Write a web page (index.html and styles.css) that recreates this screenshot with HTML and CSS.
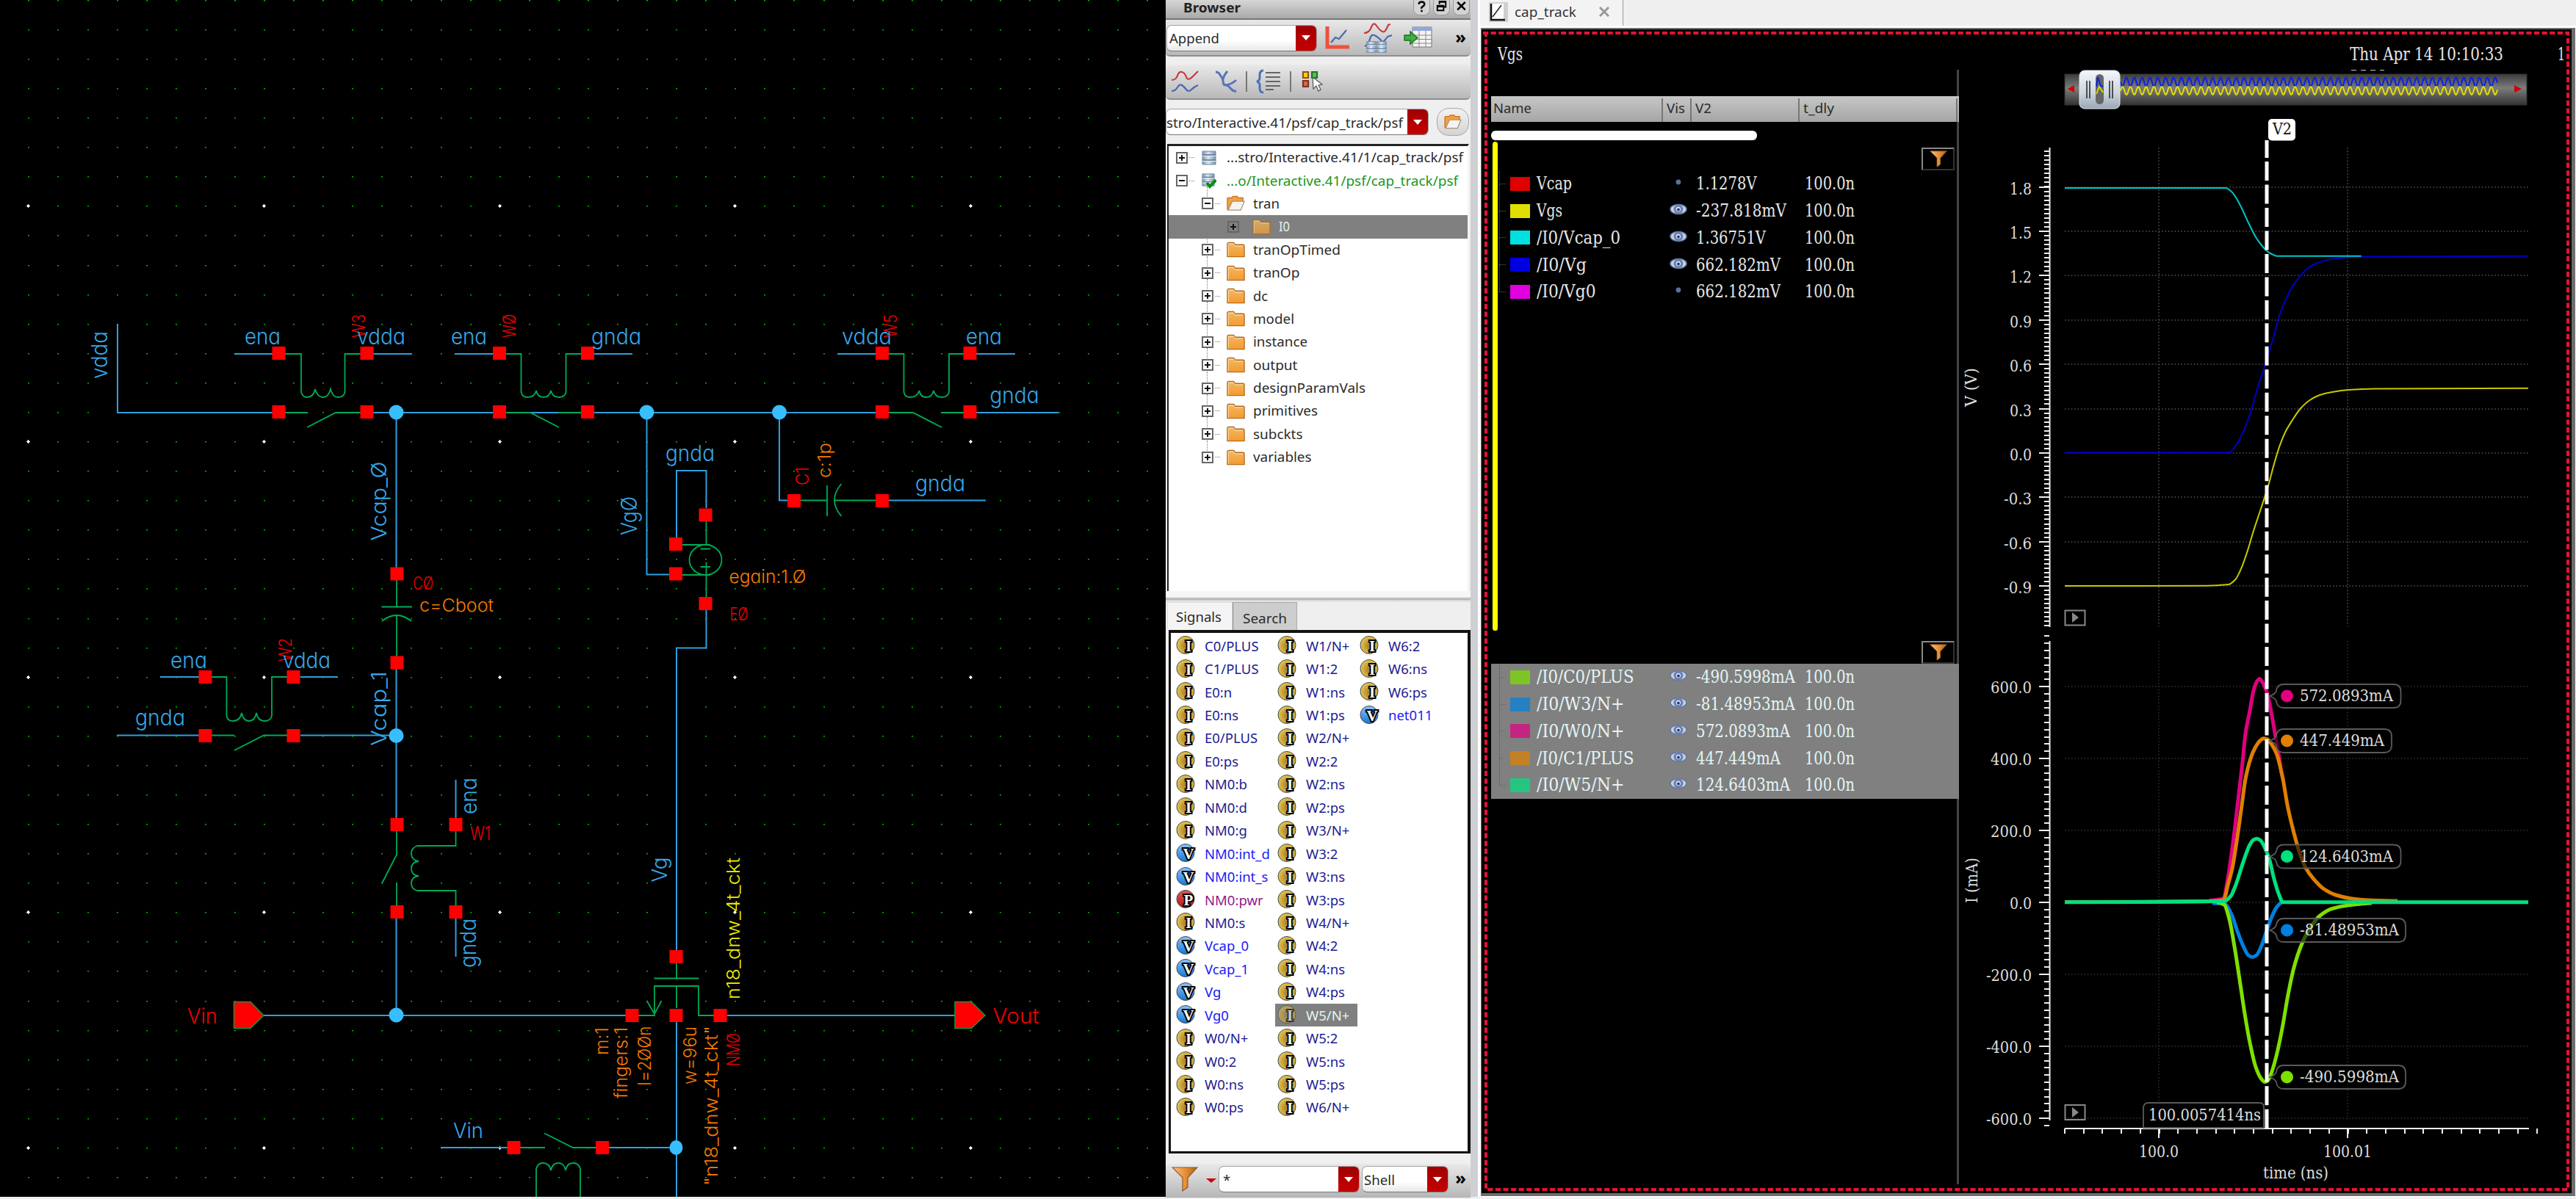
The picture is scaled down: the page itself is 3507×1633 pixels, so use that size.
FILE: index.html
```html
<!DOCTYPE html>
<html lang="en">
<head>
<meta charset="utf-8">
<title>cap_track</title>
<link rel="stylesheet" href="styles.css">
</head>
<body>
<svg width="0" height="0" class="defs">
  <defs>
    <linearGradient id="gFolder" x1="0" y1="0" x2="0" y2="1"><stop offset="0" stop-color="#f0b968"/><stop offset="1" stop-color="#f59a2e"/></linearGradient>
    <linearGradient id="gFunnel" x1="0" y1="0" x2="1" y2="0"><stop offset="0" stop-color="#f7c48a"/><stop offset=".5" stop-color="#ec9038"/><stop offset="1" stop-color="#a8641c"/></linearGradient>
    <linearGradient id="gDb" x1="0" y1="0" x2="1" y2="0"><stop offset="0" stop-color="#7d97b3"/><stop offset=".45" stop-color="#d9e6f0"/><stop offset="1" stop-color="#7b93ad"/></linearGradient>
    <radialGradient id="gI" cx=".55" cy=".55" r=".6"><stop offset="0" stop-color="#a8741c"/><stop offset="1" stop-color="#e6cf5c"/></radialGradient>
    <linearGradient id="gV" x1="0" y1="0" x2="0" y2="1"><stop offset="0" stop-color="#8cc4ff"/><stop offset="1" stop-color="#1478d8"/></linearGradient>
    <linearGradient id="gP" x1="0" y1="0" x2="0" y2="1"><stop offset="0" stop-color="#e05a5a"/><stop offset="1" stop-color="#b01818"/></linearGradient>
    <linearGradient id="gTrack" x1="0" y1="0" x2="0" y2="1"><stop offset="0" stop-color="#3c3c3c"/><stop offset=".45" stop-color="#7c7c7c"/><stop offset="1" stop-color="#333"/></linearGradient>
    <linearGradient id="gHandle" x1="0" y1="0" x2="0" y2="1"><stop offset="0" stop-color="#f4f6fa"/><stop offset=".6" stop-color="#ccd4dd"/><stop offset="1" stop-color="#9aa6b4"/></linearGradient>
    <symbol id="folder" viewBox="0 0 26 22"><path d="M1 3q0-2 2-2h7l2 3h11q2 0 2 2v15h-24z" fill="url(#gFolder)" stroke="#b9691c" stroke-width="1.4"/><path d="M2.5 20V3H10l2 3h11" fill="none" stroke="#ffe0b0" stroke-width="1"/></symbol>
    <symbol id="folderOpen" viewBox="0 0 26 22"><path d="M1 20V4q0-1 1-1h5l2-2h6l1 2h7v6" fill="#f0a040" stroke="#c77422" stroke-width="1.4"/><path d="M2 20.5L8 8h17l-5 12.500z" fill="#f7f3ee" stroke="#a89078" stroke-width="1.3"/></symbol>
    <symbol id="db" viewBox="0 0 20 22" preserveAspectRatio="none"><path d="M1 2h18v18H1z" fill="url(#gDb)" stroke="#6f87a0"/><path d="M1 7h18M1 14h18" stroke="#5e7690" stroke-width="1.3"/><path d="M1 8.500h18M1 15.500h18" stroke="#eef4fa"/></symbol>
    <symbol id="dbCheck" viewBox="0 0 20 22"><use href="#db" x="0" y="0" width="18" height="20"/><path d="M7 14l4 5L19.500 10" fill="none" stroke="#0f8a0f" stroke-width="4"/></symbol>
    <symbol id="funnel" viewBox="0 0 36 34"><path d="M1 1h34L22 15v13l-7 5V15z" fill="url(#gFunnel)" stroke="#8d5a28" stroke-width="1.200"/></symbol>
    <symbol id="eye" viewBox="0 0 24 18"><ellipse cx="12" cy="9" rx="11" ry="6.500" fill="#c8d2e6" stroke="#6478a0" stroke-width="1.5"/><circle cx="12" cy="9" r="6.500" fill="#6a82b4"/><circle cx="12" cy="9" r="3.200" fill="#dfe6f4"/><circle cx="12" cy="9.500" r="2" fill="#2c3c68"/></symbol>
    <symbol id="dot" viewBox="0 0 24 18"><circle cx="12" cy="9" r="3.400" fill="#5a70a0"/></symbol>
  </defs>
</svg>

<main class="desk">
<section class="schematic">
<svg width="1587" height="1630" viewBox="0 0 1587 1630">
  <g id="grid"></g>
  <g class="wire">
    <path d="M160 441V562H371M508 562H1192M371 482H319M508 482H561M671 482H619M809 482H861M1192 482H1140M1329 482H1382M1329 562H1441"/>
    <path d="M539.500 562V773M539.500 911V1114M539.500 1251V1383M218 922H271M409 922H460M159 1001.500H271M409 1001.500H539"/>
    <path d="M880.500 562V782.500H912M921 733V641H961.500V692M961.500 831V882.500H921V1294M1061 562V681.500H1072M1210 681.500H1342"/>
    <path d="M620.500 1062V1114M620.500 1251V1303M359 1383H852M990 1383H1300M921 1383V1630M600 1563H691M829 1563H921"/>
  </g>
  <g class="dev">
    <path d="M388 482H410V534Q412 541 418 541Q427 541 429 530Q432 541 440 541Q447 541 450 530Q453 541 460 541Q468 541 469.500 534V482H491M388 562H419M418 582L457 562H491"/>
    <path d="M689 482H709.500V534Q711 541 718 541Q728 541 730 532Q732 541 740 541Q748 541 750 532Q752 541 761 541Q769 541 770.500 534V482H791M689 562H722L761 582M760 562H791"/>
    <path d="M1210 482H1230.500V534Q1232 541 1239 541Q1249 541 1251.500 532Q1253 541 1261 541Q1269 541 1271 532Q1273 541 1282 541Q1290 541 1292 534V482H1312M1210 562H1243L1282 582M1281 562H1312"/>
    <path d="M540 790V826.500M519.500 826.500H561M520 846Q530 838 540 838T560 846M540 838V894"/>
    <path d="M288 922H308.500V975Q310 982 317 982Q327 982 329 971Q331 982 339 982Q347 982 349 971Q351 982 360 982Q368 982 370 975V922H391M288 1001.500H319M319 1022L359 1001.500H391"/>
    <path d="M1090 681.500H1126M1126 661V703M1145.500 659Q1136 670 1136 681T1145.500 703M1136 681.500H1192"/>
    <path d="M961.500 710V742M929 742H967M929 783H967M961.500 766V813M953.500 747.500H967M953.500 772H967"/><ellipse cx="960.500" cy="762.500" rx="22" ry="20.500"/>
    <path d="M540 1131V1164L520 1203M540 1202V1233M620.500 1131V1152H568Q560 1155 560 1162Q560 1172 570 1173Q560 1174 560 1183Q560 1192 570 1193Q560 1194 560 1203Q560 1211 568 1213H620.500V1233"/>
    <path d="M921 1312V1332.500M890.500 1332.500H951.500M869 1383H891V1343H951V1383H972M921 1343V1373M880.500 1363L891 1381L900.500 1363"/>
    <path d="M708 1563H742M741 1543.500L780 1563H811M730 1630V1592Q732 1584 739 1584Q748 1584 750 1594Q752 1584 760 1584Q768 1584 770 1594Q772 1584 780 1584Q788 1584 790 1592V1630"/>
  </g>
  <g class="pinshape"><path d="M318.500 1364.500H341L359 1383L341 1400.500H318.500z"/><path d="M1300 1364.500H1322.500L1341 1383L1322.500 1400.500H1300z"/></g>
  <g id="pads" class="pad"></g>
  <g class="joint"><circle cx="539.500" cy="561.500" r="10"/><circle cx="880.500" cy="561.500" r="10"/><circle cx="1061" cy="561.500" r="10"/><circle cx="539.500" cy="1002" r="10"/><circle cx="539.500" cy="1382.500" r="10"/><ellipse cx="920.500" cy="1563" rx="9" ry="10"/></g>
  <g id="netText" class="cad"></g>
</svg>
</section>

<section class="browser">
  <header class="title"><b class="fit" data-w="78">Browser</b><span class="winbtns">
    <i><svg viewBox="0 0 22 20"><path d="M7 6q0-3.500 4-3.500t4 3.500q0 2-2.500 3.300T11 12.500M11 14.500v2.500" fill="none" stroke="#000" stroke-width="2.600"/></svg></i>
    <i><svg viewBox="0 0 22 20"><path d="M8 6V2h9v8h-3M5 8h9v7H5zM5 9.500h9M8 3h9" fill="none" stroke="#000" stroke-width="2"/></svg></i>
    <i><svg viewBox="0 0 22 20"><path d="M5.500 3L16.500 14M16.500 3L5.500 14" stroke="#000" stroke-width="2.800"/></svg></i></span></header>
  <div class="bar bar1">
    <div class="combo c1"><span class="fit" data-w="68">Append</span><i></i></div>
    <svg class="i1" width="34" height="34" viewBox="0 0 34 34"><path d="M3 1V29H33" fill="none" stroke="#f0503c" stroke-width="5"/><path d="M8 23L14 16L19 18L29 6" fill="none" stroke="#4868b0" stroke-width="2.200"/></svg>
    <svg class="i2" width="40" height="42" viewBox="0 0 40 42"><path d="M1 14Q8 14 11 6T18 4T26 12T34 3L37 2" fill="none" stroke="#c83c3c" stroke-width="2.200"/><path d="M2 32Q7 30 9 22T17 18T25 25T33 19L39 17" fill="none" stroke="#4868b0" stroke-width="2.200"/><use href="#db" x="4" y="24" width="14" height="18"/><use href="#db" x="18" y="24" width="14" height="18"/></svg>
    <svg class="i3" width="40" height="32" viewBox="0 0 40 32"><path d="M12 1H38V28H12z" fill="#f4f4f4" stroke="#777"/><path d="M12 1H38V6H12z" fill="#92a8dc"/><path d="M12 12H38M12 17.500H38M12 23H38M21 6V28M30 6V28" stroke="#888"/><path d="M1 12H9V7L19 15.500L9 24V19H1z" fill="#3cb040" stroke="#1c6c20" stroke-width="1.400"/></svg>
    <b class="more">»</b>
  </div>
  <div class="bar bar2">
    <svg width="38" height="30" viewBox="0 0 38 30"><path d="M1 13Q7 13 9 7T15 2T21 9T30 8T37 1" fill="none" stroke="#c83c3c" stroke-width="2.200"/><path d="M1 28Q6 28 9 23T15 20T21 26T28 26T37 20" fill="none" stroke="#4868b0" stroke-width="2.200"/></svg>
    <svg class="j2" width="30" height="30" viewBox="0 0 30 30"><path d="M1 2Q5 2 7 6L11 12Q12 7 17 1M10 10L12 19L16 20Q24 18 29 13M12 20Q17 19 21 24T29 28" fill="none" stroke="#5874b8" stroke-width="3"/></svg>
    <i class="sep"></i>
    <svg class="j3" width="34" height="34" viewBox="0 0 34 34"><path d="M10 2Q5 2 5 8V12Q5 16 1 17Q5 18 5 22V26Q5 32 10 32" fill="none" stroke="#5070b4" stroke-width="3"/><path d="M13 5H33M13 11H33M13 17H33M13 23H33M13 28H24" stroke="#666" stroke-width="2"/></svg>
    <i class="sep"></i>
    <svg class="j4" width="30" height="30" viewBox="0 0 30 30"><path d="M2 2H9V10H2z" fill="#ffd200" stroke="#905018" stroke-width="2.200"/><path d="M14 2H21V10H14z" fill="#50c850" stroke="#207820" stroke-width="2.200"/><path d="M2 14H9V22H2z" fill="#d86a50" stroke="#803020" stroke-width="2.200"/><path d="M15 9L16 25L20 21L23 28L26 26L23 20L28 19z" fill="#fff" stroke="#555" stroke-width="1.200"/></svg>
  </div>
  <div class="path"><div class="combo c2"><span class="fit" data-w="322">stro/Interactive.41/psf/cap_track/psf</span><i></i></div><div class="fbtn"><svg width="24" height="20"><use href="#folderOpen"/></svg></div></div>
  <div class="tree" id="tree"></div>
  <div class="splitH"></div>
  <div class="tabs"><span class="on"><u class="fit" data-w="62">Signals</u></span><span><u class="fit" data-w="60">Search</u></span></div>
  <div class="signals" id="signals"></div>
  <footer class="bar bar3"><svg width="36" height="34"><use href="#funnel"/></svg><i class="tri"></i><div class="combo c3"><span>*</span><i></i></div><div class="combo c4"><span class="fit" data-w="42">Shell</span><i></i></div><b class="more">»</b></footer>
</section>

<div class="splitV"></div>

<section class="wave">
  <nav class="wtabs"><span class="wtab"><svg width="26" height="27" viewBox="0 0 26 27"><path d="M0 0H26V27H0z" fill="#d0d0d0"/><path d="M3 2H20V23H3z" fill="#fff"/><path d="M3 2V24H22" fill="none" stroke="#111" stroke-width="2.500"/><path d="M5 20L17 4" stroke="#222" stroke-width="1.500"/></svg><em class="fit" data-w="84">cap_track</em><svg class="close" width="14" height="14" viewBox="0 0 14 14"><path d="M1 1L13 13M13 1L1 13" stroke="#999" stroke-width="3"/></svg></span></nav>
  <div class="frame">
    <svg class="dash" width="1485" height="1590"><path d="M2 8H1479V1583H6V8" fill="none" stroke="#e01535" stroke-width="4" stroke-dasharray="7.200 3.400"/></svg>
    <div class="whead"><span class="fit" data-w="34">Vgs</span><span class="fit date" data-w="209">Thu Apr 14 10:10:33</span><span class="fit pg" data-w="10">1</span></div>
    <div class="wbody">
      <div class="legend">
        <div class="lhead"><span><u class="fit" data-w="52">Name</u></span><span><u class="fit" data-w="25">Vis</u></span><span><u class="fit" data-w="22">V2</u></span><span><u class="fit" data-w="42">t_dly</u></span></div>
        <div class="hscroll"></div>
        <div class="group volts"><div class="ybar"></div><div class="gmain"><div class="fb"><svg width="24" height="23"><use href="#funnel"/></svg></div><div id="volts" class="rows"></div></div></div>
        <div class="fb fb2"><svg width="24" height="23"><use href="#funnel"/></svg></div>
        <div id="amps" class="rows sel"></div>
      </div>
      <svg class="plot" width="837" height="1520" viewBox="2664 95 837 1520">
        <path d="M2665.500 95V1613" stroke="#444" stroke-width="3"/>
        <path d="M3201 95.500H3246" stroke="#aaa" stroke-width="1.500" stroke-dasharray="7 6"/>
        <rect x="2811" y="101" width="629" height="42" fill="url(#gTrack)" stroke="#333"/>
        <path d="M2824 116V126L2815 121zM3423 116V126L3433 121z" fill="#d00000"/>
        <g id="mini" fill="none" stroke-width="2"></g>
        <rect x="2831" y="96" width="55" height="52" rx="7" fill="url(#gHandle)" stroke="#dfe4ea"/>
        <rect x="2853" y="101" width="11" height="41" rx="5.500" fill="#666"/>
        <path d="M2854 118L2856 105L2860 117L2863 118" stroke="#0a28e0" stroke-width="2" fill="none"/><path d="M2854 128L2858 118L2863 126" stroke="#d8d800" stroke-width="2" fill="none"/>
        <path d="M2841 110V134M2845 110V134M2872 110V134M2876 110V134" stroke="#222" stroke-width="1.500"/>
        <g id="axes"></g>
        <g id="curves" fill="none" stroke-linejoin="round"></g>
        <path d="M3086 191V215M3086 220V1537" stroke="#fff" stroke-width="5" stroke-dasharray="26 5.480"/>
        <rect x="3088" y="162" width="37" height="29.500" rx="5" fill="#fff"/>
        <text class="ser flag" x="3094" y="183" textLength="26" lengthAdjust="spacingAndGlyphs">V2</text>
        <g id="tips"></g>
        <g class="play"><rect x="2811.500" y="831.500" width="27" height="20"/><path d="M2821 834L2830 841L2821 848z"/><rect x="2811.500" y="1505" width="27" height="20"/><path d="M2821 1508L2830 1515L2821 1522z"/></g>
      </svg>
    </div>
  </div>
</section>
</main>
<script src="app.js"></script>
</body>
</html>
```
FILE: styles.css
```css
* { box-sizing: border-box; }
body { margin: 0; background: #efefef; overflow: hidden; font: 18.5px "Noto Sans", "Open Sans", sans-serif; color: #2b2b2b; }
.defs { position: absolute; }
.desk { display: flex; width: 3507px; height: 1633px; align-items: flex-start; }
.desk svg { display: block; flex: none; }
.fit { display: inline-block; transform-origin: 0 50%; white-space: pre; text-decoration: none; font-style: normal; }
em { font-style: normal; }

/* schematic canvas */
.schematic { flex: none; width: 1587px; height: 1630px; background: #000; }
.wire path { fill: none; stroke: #2e9fdf; stroke-width: 2; }
.dev path, .dev ellipse { fill: none; stroke: #00ab55; stroke-width: 1.8; }
.pinshape path { fill: #f00; stroke: #1c8f3f; stroke-width: 1.5; }
.pad { fill: #f00; }
.joint { fill: #38bdff; }
.cad text { font-family: "Inter", "Liberation Sans", sans-serif; font-weight: 300; font-feature-settings: "cv11"; }

/* browser dock */
.browser { flex: none; width: 415px; height: 1630px; background: #efefef; display: flex; flex-direction: column; }
.title { height: 27px; flex: none; display: flex; justify-content: space-between; background: linear-gradient(#d6d6d6, #a9a9a9); border-bottom: 2px solid #777; padding: 0 1px 0 24px; line-height: 20px; font-size: 17.500px; }
.title b { color: #222; width: 90px; }
.winbtns { display: flex; gap: 4px; }
.winbtns i { width: 23px; height: 21px; border: 1px solid #999; border-top: 0; border-radius: 0 0 8px 8px; background: #d4d4d4; }
.bar { flex: none; display: flex; align-items: center; background: linear-gradient(#e9e9e9, #b8b8b8); border-bottom: 2px solid #8e8e8e; border-radius: 0 0 6px 6px; }
.bar1 { height: 50px; padding: 1px 6px 0 1px; margin-bottom: 11px; }
.bar2 { height: 48px; padding-left: 7px; border-radius: 6px; }
.bar3 { height: 46px; margin-top: 14px; padding: 0 6px 3px 8px; border-bottom: 1px solid #aaa; border-radius: 6px 6px 0 0; }
.more { font: bold 24px/24px "Noto Sans", sans-serif; color: #000; margin-left: auto; padding-bottom: 4px; }
.combo { flex: none; display: flex; align-items: center; justify-content: space-between; height: 36px; border: 1px solid #a5a5a5; border-bottom-color: #777; border-radius: 7px; background: linear-gradient(#fff 60%, #e8e8e8); overflow: hidden; padding-left: 3px; }
.combo i { flex: none; align-self: stretch; width: 28px; background: linear-gradient(#a00000, #c60000); display: grid; place-items: center; }
.combo i::after { content: ""; border: 6px solid transparent; border-top: 7px solid #fff; border-bottom: 0; }
.c1 { width: 205px; }
.i1 { margin-left: 11px; } .i2 { margin-left: 18px; } .i3 { margin-left: 15px; }
.j2 { margin-left: 22px; } .j3 { margin-left: 12px; } .j4 { margin-left: 14px; }
.sep { width: 2px; height: 28px; background: #777; margin-left: 12px; }
.path { flex: none; display: flex; height: 60px; align-items: center; }
.c2 { width: 358px; padding-left: 0; background: #fff; }
.c2 span { width: 0; }
.fbtn { width: 44px; height: 38px; margin-left: 11px; border: 1px solid #a9a9a9; border-radius: 16px; background: linear-gradient(#f2f2f2, #d4d4d4); display: grid; place-items: center; }
.tree { flex: none; height: 609px; margin: 0 2px 0 2px; background: #fff; border-top: 3px solid #222; border-left: 2px solid #222; border-right: 2px solid #f4f4f4; padding-top: 0; }
.trow { height: 31.4px; display: flex; align-items: center; }
.trow svg { width: 25px; height: 22px; margin-right: 11px; }
.trow.l0 svg { width: 20px; margin: 0 14px 0 10px; }
.trow .fit { margin-top: -2px; }
.trow.sel { background: #808080; color: #e4f4f4; }
.trow.sel svg { opacity: .75; }
.ex { flex: none; width: 16px; height: 16px; border: 2px solid #666; background: linear-gradient(#111, #111) 50% 50%/8px 2px no-repeat; margin-right: 8px; }
.ex.plus { background: linear-gradient(#111, #111) 50% 50%/8px 2px no-repeat, linear-gradient(#111, #111) 50% 50%/2px 8px no-repeat; }
.lead { width: 7px; border-top: 1.5px dotted #777; margin: 0 9px 0 -6px; flex: none; }
.l0 .lead { margin-right: 0; }
.l0 { padding-left: 10px; } .l1 { padding-left: 45px; } .l2 { padding-left: 80px; }
.l1 .ex { position: relative; }
.l1 .ex::before { content: ""; position: absolute; left: 5px; top: -17px; height: 14px; border-left: 1.5px dotted #777; }
.splitH { flex: none; height: 15px; background: linear-gradient(#f6f6f6 8px, #b9b9b9 10px, #b9b9b9 12px, #e4e4e4 13px); }
.tabs { flex: none; height: 38px; display: flex; padding-left: 2px; }
.tabs span { width: 88px; padding: 7px 0 0 13px; line-height: 27px; background: #cdcdcd; border: 1px solid #aaa; border-left-color: #888; border-bottom: 0; }
.tabs .on { width: 89px; background: #f4f4f4; border-color: #ddd; padding: 5px 0 0 11px; }
.signals { flex: none; height: 713px; margin-left: 4px; background: #fff; border: 3px solid #111; border-width: 4px 4px 3px 3px; padding: 1.5px 0 0 4px; display: grid; grid-template: repeat(21, 31.45px) / 138px 112px 120px; grid-auto-flow: column; align-content: start; }
.sig { display: flex; align-items: center; color: #1c1c90; padding-left: 3px; }
.sig svg { width: 27px; height: 26px; margin-right: 12px; }
.sig.V { color: #1c1cf4; } .sig.P { color: #8c1c8c; }
.sig.sel { background: #808080; color: #e4f4f4; }
.sig.sel svg { opacity: .6; }
.sig text { font: bold 21px "Liberation Serif", serif; fill: #fff; stroke: #000; stroke-width: 4px; paint-order: stroke; }
.tri { border: 7px solid transparent; border-top: 6px solid #c00; border-bottom: 0; margin: 4px 3px 0 11px; }
.c3 { width: 192px; background: #fff; padding-left: 5px; } .c4 { width: 118px; margin-left: 3px; padding-left: 2px; }
.splitV { flex: none; width: 13px; height: 1630px; background: linear-gradient(90deg, #cfd0d4 0 10px, #fff 10px); }

/* waveform window */
.wave { flex: none; width: 1492px; height: 1631px; background: #fff; }
.wtabs { height: 35px; background: #efefef; }
.wtab { display: flex; align-items: center; width: 195px; height: 35px; padding: 0 0 3px 12px; border-right: 1px solid #999; background: #f3f3f3; color: #333; }
.wtab em { width: 84px; margin-left: 9px; font-size: 18px; }
.close { margin-left: 31px; }
.frame { position: relative; margin: 3px 0 0 1px; width: 1490px; height: 1591px; background: #000; border: 2px solid #6d6d6d; border-width: 2px 5px 4px 1px; }
.dash { position: absolute; left: 0; top: -3px; }
.whead { height: 55px; padding: 16px 0 0 22px; display: flex; line-height: 36px; }
.whead, .rows, .ser { font-family: "DejaVu Serif Condensed", "DejaVu Serif", serif; font-size: 24px; color: #e6e6e6; }
.whead span { width: 0; }
.whead .date { margin-left: 1159.500px; } .whead .pg { margin-left: 283px; }
.wbody { display: flex; padding-left: 13px; }
.legend { flex: none; width: 634px; }
.lhead { height: 35px; margin: 36px -3px 0 0; display: grid; grid-template-columns: 236px 39px 147px 1fr; background: linear-gradient(#c6c6c6, #a6a6a6); position: relative; z-index: 1; }
.lhead span { border-right: 2px solid #777; padding-left: 3px; margin: 3px 2px 0 0; line-height: 26px; }
.hscroll { width: 362px; height: 13px; border-radius: 6px; background: #fff; margin-top: 12px; }
.volts { display: flex; height: 669px; }
.ybar { width: 7px; height: 666px; margin: 2px 2px 0 2px; border-radius: 4px; background: #ff0; }
.gmain { flex: 1; padding-top: 10px; }
.fb { width: 45px; height: 31px; border: 2px solid #888; border-color: #888 #333 #333 #888; display: grid; place-items: center; margin-left: auto; margin-right: 3px; }
.fb2 { margin-top: 13px; }
.row { height: 36.75px; display: grid; grid-template-columns: 15px 27px 168px 58px 148px 1fr; align-items: center; }
.row svg { width: 24px; height: 18px; justify-self: start; margin-left: 22px; margin-top: -4px; }
.row s { width: 27px; height: 19px; }
.row b { font-weight: 400; padding-left: 9px; }
.row q { quotes: none; width: 9px; border-top: 1.5px dotted #666; position: relative; }
.row:not(:last-child) q::after, .row:first-child q::before { content: ""; position: absolute; left: 0; top: 0; height: 36px; border-left: 1.5px dotted #555; }
.row:first-child q::before { top: -18px; height: 18px; }
.sel.rows { background: #808080; height: 184px; margin-right: -3px; position: relative; z-index: 1; padding-left: 11px; color: #e4f6f6; }
.ser { fill: #ddd; font-size: 23px; }
.ser.flag { fill: #111; }
.play rect { fill: none; stroke: #888; stroke-width: 2; } .play path { fill: #888; }
```
FILE: app.js
```js
const $ = id => document.getElementById(id);

// grid dots, every eighth one is a major mark
let dots = '';
for (let i = -1; i < 39; i++) for (let j = -7; j < 34; j++) {
  const x = Math.round(38.4 + i * 40.08), y = Math.round(280.4 + j * 40.08);
  if (x > 1586 || y > 1629 || y < 0) continue;
  dots += (i % 8 === 0 && j % 8 === 0)
    ? `<path d="M${x - 2} ${y}h5v1h-5zM${x} ${y - 2}h1v5h-1zM${x - 1} ${y - 1}h3v3h-3z" fill="#fff"/>`
    : `<rect x="${x}" y="${y}" width="2" height="1.500" fill="#00b800"/>`;
}
$('grid').innerHTML = dots;

$('pads').innerHTML = [[379.5,481],[499.5,481],[680,481],[800,481],[1201,481],[1320.5,481],[379.5,561],[499.5,561],[680,561],[800,561],[1201,561],[1320.5,561],
 [540.5,781.5],[540.5,902.5],[279.5,922],[399.5,922],[279.5,1002],[399.5,1002],[920,741],[920,781.5],[960.5,701.5],[960.5,822],[1081,682],[1201,682],
 [540.5,1123],[540.5,1242],[620.5,1123],[620.5,1242],[860.5,1383],[920.5,1383],[980.5,1383],[920.5,1303],[699.5,1563],[820,1563]]
 .map(([x, y]) => `<rect x="${x - 9}" y="${y - 9}" width="18" height="18"/>`).join('');

// label: text, x, y, drawn length, size, colour, vertical
const B = '#35a8ea', R = '#f00000', O = '#f87c00', Y = '#f0f000';
$('netText').innerHTML = [
 ['vdda',146,516,65,30,B,1],['ena',333,469,49,30,B],['W3',496.5,460,32,24,R,1],['vdda',486,469,66,30,B],['ena',614,469,49,30,B],['WØ',701.5,460,32,24,R,1],
 ['gnda',805,469,68,30,B],['Vcap_Ø',526,736.5,108,29,B,1],['VgØ',867,729,53,30,B,1],['CØ',562,802.5,28,24,R],['c=Cboot',571,832.5,101,24,O],['W2',397,901,32,24,R,1],
 ['ena',232,909.5,50,30,B],['vdda',385,909.5,65,30,B],['gnda',184,988,68,30,B],['Vcap_1',526,1016,102,29,B,1],
 ['vdda',1146,469,68,30,B],['W5',1221,460,32,24,R,1],['ena',1315,469,49,30,B],['gnda',1347.5,549,67,30,B],['gnda',906,628,67,30,B],['c:1p',1131,651,48,24,O,1],
 ['C1',1101,661,25,24,R,1],['gnda',1246,669,68,30,B],['egain:1.Ø',992.5,794,105,24,O],['EØ',993.5,844.5,25,24,R],
 ['ena',649,1109,50,30,B,1],['W1',640,1144,28,25,R],['gnda',648,1318,67,30,B,1],['Vin',255,1393.5,41,29,R],['Vout',1351.5,1393.5,63,29,R],['Vg',907.5,1201.5,34,29,B,1],
 ['n18_dnw_4t_ckt',1006.5,1361,193,24,Y,1],['m:1',828,1437,38,24,O,1],['fingers:1',854,1496,97,24,O,1],['l=2ØØn',886,1478.5,81,24,O,1],['w=96u',947.5,1477,79,24,O,1],
 ['"n18_dnw_4t_ckt"',976.5,1615,218,24,O,1],['NMØ',1007,1452,45,24,R,1],['Vin',617,1549.5,41,29,B]
].map(([t,x,y,w,s,c,v]) => `<text x="${x}" y="${y}" font-size="${s}" fill="${c}" textLength="${w}" lengthAdjust="spacingAndGlyphs"${v ? ` transform="rotate(-90 ${x} ${y})"` : ''}>${t}</text>`).join('');

// result tree
$('tree').innerHTML = [[0,'plus','db','...stro/Interactive.41/1/cap_track/psf',322],[0,'','dbCheck','...o/Interactive.41/psf/cap_track/psf',315],[1,'','folderOpen','tran',36],[2,'plus','folder','I0',15],
 [1,'plus','folder','tranOpTimed',119],[1,'plus','folder','tranOp',63.5],[1,'plus','folder','dc',20],[1,'plus','folder','model',56],[1,'plus','folder','instance',74],[1,'plus','folder','output',60.5],
 [1,'plus','folder','designParamVals',153],[1,'plus','folder','primitives',88],[1,'plus','folder','subckts',67.5],[1,'plus','folder','variables',79.5]]
 .map(([l,e,i,t,w]) => `<div class="trow l${l}${l === 2 ? ' sel' : ''}"><i class="ex ${e}"></i><i class="lead"></i><svg><use href="#${i}"/></svg><span class="fit" data-w="${w}"${i === 'dbCheck' ? ' style="color:#1c961c"' : ''}>${t}</span></div>`).join('');

// signal list
const names = 'C0/PLUS C1/PLUS E0:n E0:ns E0/PLUS E0:ps NM0:b NM0:d NM0:g V|NM0:int_d V|NM0:int_s P|NM0:pwr NM0:s V|Vcap_0 V|Vcap_1 V|Vg V|Vg0 W0/N+ W0:2 W0:ns W0:ps W1/N+ W1:2 W1:ns W1:ps W2/N+ W2:2 W2:ns W2:ps W3/N+ W3:2 W3:ns W3:ps W4/N+ W4:2 W4:ns W4:ps W5/N+ W5:2 W5:ns W5:ps W6/N+ W6:2 W6:ns W6:ps V|net011'.split(' ');
$('signals').innerHTML = names.map(n => {
  const [k, t] = n.includes('|') ? n.split('|') : ['I', n];
  return `<div class="sig ${k}${t === 'W5/N+' ? ' sel' : ''}"><svg viewBox="0 0 27 26"><circle cx="13" cy="12.500" r="12" fill="url(#g${k})" stroke="#444"/><text x="17" y="21" text-anchor="middle">${k}</text></svg><span>${t}</span></div>`;
}).join('');

// legend rows
const rows = list => list.map(([n,w,c,e,v,vw]) => `<div class="row"><q></q><s style="background:${c}"></s><b><span class="fit" data-w="${w}">${n}</span></b><svg><use href="#${e}"/></svg><span><span class="fit" data-w="${vw}">${v}</span></span><span><span class="fit" data-w="68">100.0n</span></span></div>`).join('');
$('volts').innerHTML = rows([['Vcap',48,'#e00000','dot','1.1278V',82.5],['Vgs',35,'#e0e000','eye','-237.818mV',123],['/I0/Vcap_0',114,'#00e0e0','eye','1.36751V',95],['/I0/Vg',68,'#0000e0','eye','662.182mV',115],['/I0/Vg0',80.5,'#e000e0','dot','662.182mV',115]]);
$('amps').innerHTML = rows([['/I0/C0/PLUS',132.5,'#7fc425','eye','-490.5998mA',135],['/I0/W3/N+',119.5,'#2580c4','eye','-81.48953mA',135],['/I0/W0/N+',119.5,'#c42580','eye','572.0893mA',128],['/I0/C1/PLUS',132.5,'#c48025','eye','447.449mA',115],['/I0/W5/N+',119.5,'#25c480','eye','124.6403mA',128]]);

// overview strip
const strip = (mid, amp, ph, c) => { let d = ''; for (let x = 2887; x <= 3400; x += 1) d += (d ? 'L' : 'M') + x + ' ' + (mid + amp * Math.sin((x - 2887) / 10.68 * 6.283 + ph)).toFixed(1); return `<path d="${d}" stroke="${c}"/>`; };
$('mini').innerHTML = strip(111.5, 6, 0, '#0a20e8') + strip(123.5, 5.5, 3.14, '#e0e000');

// axes
const T = (t,x,y,w,a='start') => { const x0 = a === 'end' ? x - w : a === 'middle' ? x - w / 2 : x; return `<text class="ser" x="${x0}" y="${y}" textLength="${w}" lengthAdjust="spacingAndGlyphs">${t}</text>`; };
const L = (d,c,w,da='') => `<path d="${d}" stroke="${c}" stroke-width="${w}" fill="none"${da ? ` stroke-dasharray="${da}"` : ''}/>`;
let ax = '', tick = '';
['1.8','1.5','1.2','0.9','0.6','0.3','0.0','-0.3','-0.6','-0.9'].forEach((t,i) => {
  const y = Math.round(254.5 + i * 60.4);
  ax += L(`M2811 ${y}H3442`, '#555', 1.5, '1.500 2.900') + T(t, 2766, y + 9.5, t[0] === '-' ? 38 : 30, 'end');
  tick += `M2776 ${y}H2790`;
});
for (let y = 254.5 - 8 * 6.04; y < 854; y += 6.04) tick += `M2783 ${Math.round(y)}H2790`;
['600.0','400.0','200.0','0.0','-200.0','-400.0','-600.0'].forEach((t,i) => {
  const y = Math.round(935 + i * 98);
  ax += L(`M2811 ${y}H3442`, '#333', 1.5, '1.500 2.900') + T(t, 2766, y + 9, t === '0.0' ? 30 : t[0] === '-' ? 62 : 56, 'end');
  tick += `M2776 ${y}H2790`;
});
for (let y = 935 - 7 * 9.8; y < 1533; y += 9.8) tick += `M2783 ${Math.round(y)}H2790`;
for (const x of [2939, 3196]) { ax += L(`M${x} 201V853`, '#555', 1.5, '1.500 2.900') + L(`M${x} 873V1525`, '#333', 1.5, '1.500 2.900'); tick += `M${x} 1537V1550`; }
for (let i = 0; i < 26; i++) tick += `M${Math.round(2811 + i * 25.7)} 1537V1544`;
ax += L(tick + 'M2790.500 201V854M2790.500 873V1526M2811 1537H3443', '#eee', 2);
ax += T('100.0', 2939, 1576, 54, 'middle') + T('100.01', 3196, 1576, 66, 'middle') + T('time (ns)', 3081, 1605, 89);
ax += `<g transform="rotate(-90 2691 554)">${T('V (V)', 2691, 554, 53)}</g><g transform="rotate(-90 2692 1230)">${T('I (mA)', 2692, 1230, 62)}</g>`;
$('axes').innerHTML = ax;

// traces, drawn as smooth splines through sampled points
const spline = p => {
  let d = `M${p[0]}`;
  for (let i = 0; i < p.length - 1; i++) {
    const a = p[i - 1] || p[i], b = p[i], c = p[i + 1], e = p[i + 2] || c, k = (c[0] - b[0]) / 3;
    const s = (m, n) => n[0] === m[0] ? 0 : (n[1] - m[1]) / (n[0] - m[0]);
    const flat = (s1, s2) => s1 * s2 <= 0 ? 0 : 2 * s1 * s2 / (s1 + s2);
    const m1 = flat(s(a, b), s(b, c)), m2 = flat(s(b, c), s(c, e));
    d += `C${(b[0] + k).toFixed(1)} ${(b[1] + m1 * k).toFixed(1)} ${(c[0] - k).toFixed(1)} ${(c[1] - m2 * k).toFixed(1)} ${c[0]} ${c[1]}`;
  }
  return d;
};
const orange = [[2811,1228.5],[3008,1227.5],[3027,1226],[3033.7,1203],[3039,1183],[3044.6,1149],[3051.7,1099],[3057,1061],[3064,1033],[3069.8,1019],[3076.3,1009.3],[3081.8,1005.7],[3086,1006.5],[3092.7,1014],[3099.3,1026.4],[3103,1039],[3108,1061],[3114.6,1099],[3122.8,1133.8],[3129.9,1159],[3139,1182],[3150,1197.3],[3163.8,1210.8],[3180,1219],[3202,1224],[3224,1226],[3264,1227]];
$('curves').innerHTML = [
 ['#0000c8',2,[[2811,616.5],[3034.8,616.5],[3044.6,605.7],[3054.5,587],[3065.4,556.8],[3073.6,528],[3083.4,498],[3089.4,478.7],[3095.5,458.3],[3101,436.7],[3108,416.7],[3117.3,396.7],[3125.5,383.3],[3133.7,373.3],[3144.6,363.3],[3155.6,358],[3169,354],[3190,351],[3214,349.5],[3442,348.7]]],
 ['#00c8c8',2,[[2811,256],[3030,256],[3037,260],[3044.6,270],[3051.7,283.3],[3061,303.3],[3070.9,322.7],[3079,334],[3086,341.7],[3092.7,346],[3099.8,348.7],[3214.6,348.7]]],
 ['#c8c800',2,[[2811,798],[3004.7,797.8],[3034,796],[3043.5,789],[3051.7,773],[3060,749.6],[3068,723],[3076.3,698],[3083.4,676.4],[3089,658],[3095.5,633.6],[3103.7,606.8],[3112,587],[3121,572],[3131,557.5],[3144.6,545],[3158.3,538],[3174.7,534],[3196.6,531],[3232,529.5],[3442,528.7]]],
 ['#e0007f',5,[[3007.5,1226.5],[3027,1224],[3032.6,1199],[3040.8,1141.5],[3049,1072.3],[3052.8,1040],[3057.2,998],[3062.7,969.3],[3068,940.7],[3072.5,928.2],[3076.3,924.6],[3080,929],[3086,942.5],[3091.6,967.5],[3097,998],[3102.6,1030],[3108,1059]]],
 ['#e07f00',5,orange],
 ['#007fe0',5,[[3012,1230],[3028,1230.8],[3038,1245.4],[3046,1268.5],[3054.5,1289.6],[3061,1301],[3066.5,1303.5],[3072,1301],[3079,1287.7],[3085.6,1268.5],[3092.7,1249],[3099.3,1235.8],[3107,1229]]],
 ['#7fe000',5,[[3018,1229],[3028,1232],[3035.3,1253],[3042.4,1291.5],[3049,1333.8],[3055.6,1378],[3062.7,1418.5],[3070.9,1453],[3078,1468.5],[3083.4,1473.5],[3088.3,1470.4],[3093.8,1457],[3101,1430],[3108,1395.4],[3114.6,1357],[3122.8,1318.5],[3133.7,1285.8],[3144.6,1264.6],[3158.3,1247.3],[3174.7,1237.7],[3196.6,1233],[3229,1230]]],
 ['#00e07f',5,[[2811,1228.8],[3028,1227.5],[3037,1220.4],[3044.6,1203],[3054.5,1172.3],[3062.7,1151],[3068,1143.8],[3072.5,1142.3],[3077.4,1144.6],[3084.5,1157],[3090,1172.3],[3095.5,1195.4],[3102.6,1218.5],[3108,1228.8],[3442,1228.8]]]
].map(([c,w,p]) => `<path d="${spline(p)}" stroke="${c}" stroke-width="${w}"/>`).join('');

// cursor callouts
$('tips').innerHTML = [['572.0893mA',948,3268.5,127,'#e0007f'],['447.449mA',1009,3256,115,'#e07f00'],['124.6403mA',1166.5,3268.5,127,'#00e07f'],['-81.48953mA',1267,3275,135,'#007fe0'],['-490.5998mA',1467,3275,135,'#7fe000']]
 .map(([t,y,r,w,c]) => `<path d="M3090 ${y}Q3098 ${y - 3} 3099 ${y - 7}Q3100 ${y - 16} 3109 ${y - 16}H${r - 10}Q${r} ${y - 16} ${r} ${y - 6}V${y + 6}Q${r} ${y + 16} ${r - 10} ${y + 16}H3109Q3100 ${y + 16} 3099 ${y + 7}Q3098 ${y + 3} 3090 ${y}z" fill="rgba(0,0,0,.6)" stroke="#5a5a5a" stroke-width="1.800"/><ellipse cx="3113.500" cy="${y}" rx="8.500" ry="8.500" fill="${c}"/>${T(t, 3131, y + 7, w)}`).join('')
 + `<path d="M3082 1536H2918V1508Q2919 1502 2925 1502H3076Q3082 1502 3082 1508z" fill="rgba(0,0,0,.6)" stroke="#5a5a5a" stroke-width="1.800"/>${T('100.0057414ns', 2925, 1526, 153)}`;

document.querySelectorAll('.fit').forEach(e => {
  const r = document.createRange();
  r.selectNodeContents(e);
  e.style.transform = `scaleX(${e.dataset.w / r.getBoundingClientRect().width})`;
});
```
